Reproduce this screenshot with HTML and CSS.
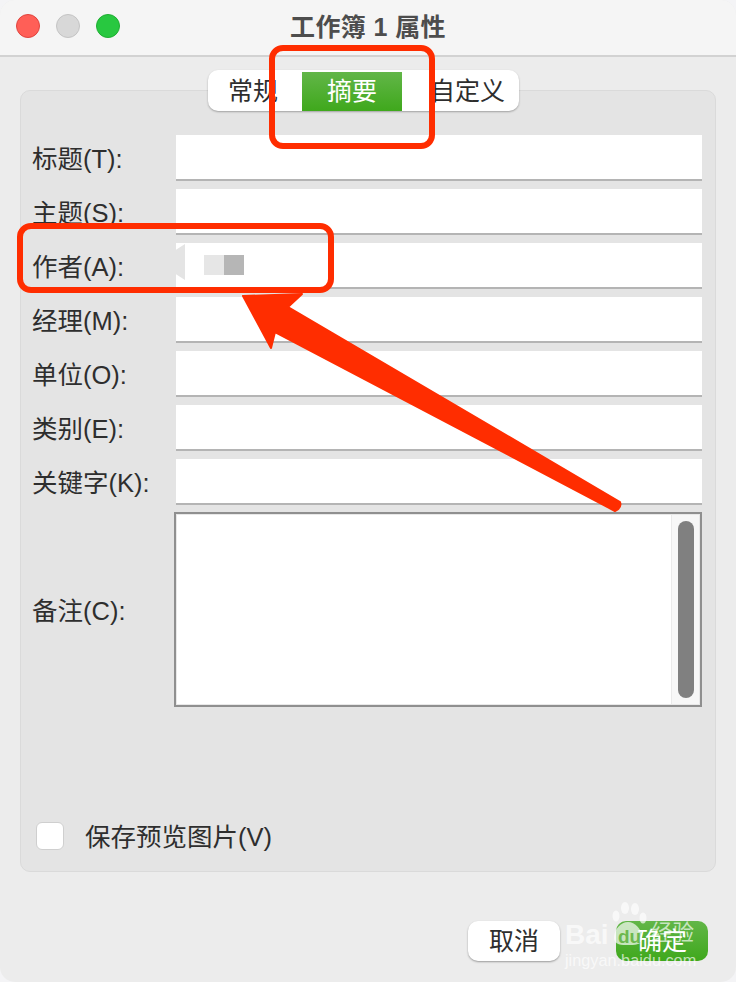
FILE: index.html
```html
<!DOCTYPE html>
<html lang="zh">
<head>
<meta charset="utf-8">
<title>工作簿1 属性</title>
<link rel="stylesheet" href="styles.css">
</head>
<body>
<div class="window">
  <header class="titlebar">
    <div class="lights"><span class="light red"></span><span class="light gray"></span><span class="light green"></span></div>
    <h1 class="title">工作簿 1 属性</h1>
  </header>
  <main class="content">
    <div class="panel">
      <nav class="tabs">
        <span class="tab tab-first">常规</span>
        <span class="tab tab-active">摘要</span>
        <span class="tab tab-last">自定义</span>
      </nav>
      <div class="form">
        <div class="row"><label>标题(T):</label><div class="field"></div></div>
        <div class="row"><label>主题(S):</label><div class="field"></div></div>
        <div class="row"><label>作者(A):</label><div class="field author"><span class="notch"></span><span class="blur light-blur"></span><span class="blur dark-blur"></span></div></div>
        <div class="row"><label>经理(M):</label><div class="field"></div></div>
        <div class="row"><label>单位(O):</label><div class="field"></div></div>
        <div class="row"><label>类别(E):</label><div class="field"></div></div>
        <div class="row"><label>关键字(K):</label><div class="field"></div></div>
        <div class="row row-notes"><label>备注(C):</label><div class="notes"><div class="notes-body"></div><div class="scrolltrack"><div class="scrollthumb"></div></div></div></div>
      </div>
      <div class="check-row"><span class="checkbox"></span><span class="check-label">保存预览图片(V)</span></div>
    </div>
    <div class="actions">
      <button class="btn btn-cancel">取消</button>
      <button class="btn btn-ok">确定</button>
    </div>
  </main>
</div>
<svg class="annotations" width="736" height="982" viewBox="0 0 736 982">
  <rect class="mark" x="272" y="48" width="160" height="98" rx="11"/>
  <rect class="mark" x="20" y="226" width="311" height="64" rx="11"/>
  <path class="arrow" d="M243 296 L302 294 L288 307 L620 502 Q622 508 615 511 L275 332 L271 348 Z"/>
</svg>
<div class="watermark">
  <svg class="paw" width="44" height="48" viewBox="0 0 44 48"><g fill="#fff"><ellipse cx="9" cy="15" rx="3.5" ry="5.5"/><ellipse cx="18" cy="7" rx="4" ry="6"/><ellipse cx="28" cy="8" rx="4" ry="6"/><ellipse cx="36" cy="17" rx="3.5" ry="5.5"/><path d="M21 21c7 0 14 7 14 16 0 7-8 7-14 7s-14 0-14-7c0-9 7-16 14-16z"/></g></svg>
  <span class="wm-bai">Bai</span><span class="wm-du">du</span><span class="wm-jy">经验</span>
  <span class="wm-url">jingyan.baidu.com</span>
</div>
</body>
</html>
```
FILE: styles.css
```css
* { box-sizing: border-box; }
html, body { margin: 0; padding: 0; background: #f4f4f6; }
body {
  width: 736px; height: 982px; overflow: hidden; position: relative;
  font-family: "Liberation Sans", "Noto Sans CJK SC", sans-serif; color: #2e2e2e;
}
.window { width: 736px; height: 982px; display: flex; flex-direction: column; background: #ececec; border-radius: 15px; }
.titlebar {
  height: 57px; flex: none; display: flex; align-items: center; position: relative;
  background: #f5f5f5; border-bottom: 2px solid #d2d2d2; border-radius: 15px 15px 0 0;
}
.lights { display: flex; gap: 16px; padding: 0 0 0 16px; margin-top: -3px; }
.light { width: 24px; height: 24px; border-radius: 50%; display: block; }
.red { background: #ff5f57; border: 1px solid #e0443e; }
.gray { background: #d8d8d8; border: 1px solid #c4c4c4; }
.green { background: #28c840; border: 1px solid #1fae32; }
.title {
  position: absolute; left: 0; right: 0; top: 9px; margin: 0; text-align: center;
  font-size: 25px; line-height: 36px; font-weight: 700; color: #4d4d4d; letter-spacing: .4px;
}
.content { flex: 1; display: flex; flex-direction: column; padding: 33px 20px 0; }
.panel {
  height: 782px; position: relative; background: #e4e4e4;
  border: 1px solid #dadada; border-radius: 10px; display: flex; flex-direction: column;
}
.tabs {
  position: absolute; top: -21px; left: 187px; width: 311px; height: 41px; display: flex;
  background: #fff; border-radius: 10px; box-shadow: 0 1px 2px rgba(0,0,0,.3);
  font-size: 25px; line-height: 42px;
}
.tab { display: block; white-space: nowrap; }
.tab-first { width: 94px; padding-left: 20px; }
.tab-active {
  width: 100px; height: 39px; margin-top: 2px; color: #fff; line-height: 39px; text-align: center;
  background: linear-gradient(#62b648, #3fa81c);
}
.tab-last { flex: 1; padding-left: 28px; }
.form { padding: 44px 13px 0 11px; display: flex; flex-direction: column; gap: 8px; }
.row { display: flex; height: 46px; align-items: center; }
.row label { width: 144px; font-size: 25.5px; line-height: 36px; padding-top: 2px; white-space: nowrap; flex: none; }
.field {
  flex: 1; height: 46px; background: #fff; border-bottom: 2px solid #b4b4b4;
  position: relative; display: flex; align-items: center;
}
.author { padding: 0 0 0 28px; }
.notch {
  position: absolute; left: 0; top: 1px; width: 9px; height: 36px; background: #e4e4e4;
  clip-path: polygon(0 16%, 100% 0, 100% 100%, 0 84%);
}
.blur { width: 20px; height: 20px; display: block; }
.light-blur { background: #e6e6e6; }
.dark-blur { background: #b6b6b6; }
.row-notes { height: 195px; margin-top: -1px; }
.row-notes label { width: 142px; }
.notes {
  flex: 1; height: 195px; display: flex; background: #fff;
  border: 2px solid #8f8f8f;
  box-shadow: inset 0 0 0 1px #e8e8e8;
}
.notes-body { flex: 1; }
.scrolltrack {
  width: 28px; margin: 1px 1px 1px 0; background: #f7f7f7; border-left: 1px solid #eaeaea;
  padding: 6px 5px 6px 6px;
}
.scrollthumb { width: 16px; height: 100%; border-radius: 8px; background: #808080; }
.check-row { position: absolute; left: 15px; top: 728px; display: flex; align-items: center; gap: 21px; }
.checkbox { width: 28px; height: 28px; margin-top: -2px; background: #fff; border: 1px solid #cfcfcf; border-radius: 6px; display: block; }
.check-label { font-size: 25.5px; line-height: 36px; white-space: nowrap; }
.actions { display: flex; justify-content: flex-end; gap: 56px; padding: 49px 8px 0 0; }
.btn {
  width: 92px; height: 40px; border: 0; padding: 0 0 5px; border-radius: 10px;
  font: 25px/30px "Noto Sans CJK SC", sans-serif;
}
.btn-cancel { background: #fff; color: #2e2e2e; box-shadow: 0 1px 2px rgba(0,0,0,.35); }
.btn-ok { background: linear-gradient(#62b648, #3fa81c); color: #fff; }
.annotations { position: absolute; left: 0; top: 0; pointer-events: none; }
.mark { fill: none; stroke: #ff2d00; stroke-width: 6px; }
.arrow { fill: #ff2d00; stroke: #ff2d00; stroke-width: 2px; stroke-linejoin: round; }
.watermark { position: absolute; left: 0; top: 0; width: 736px; height: 982px; pointer-events: none; color: rgba(255,255,255,.68); font-family: "Liberation Sans", sans-serif; }
.paw { position: absolute; left: 607px; top: 901px; opacity: .68; }
.wm-bai { position: absolute; left: 565px; top: 919px; font-size: 28px; line-height: 32px; font-weight: 700; }
.wm-du { position: absolute; left: 618px; top: 926px; font-size: 19px; line-height: 22px; font-weight: 700; color: #6cb84e; }
.wm-jy { position: absolute; left: 651px; top: 918px; font-size: 21.5px; line-height: 26px; font-family: "Noto Sans CJK SC", sans-serif; }
.wm-url { position: absolute; left: 565px; top: 950px; font-size: 16.3px; line-height: 20px; }
```
